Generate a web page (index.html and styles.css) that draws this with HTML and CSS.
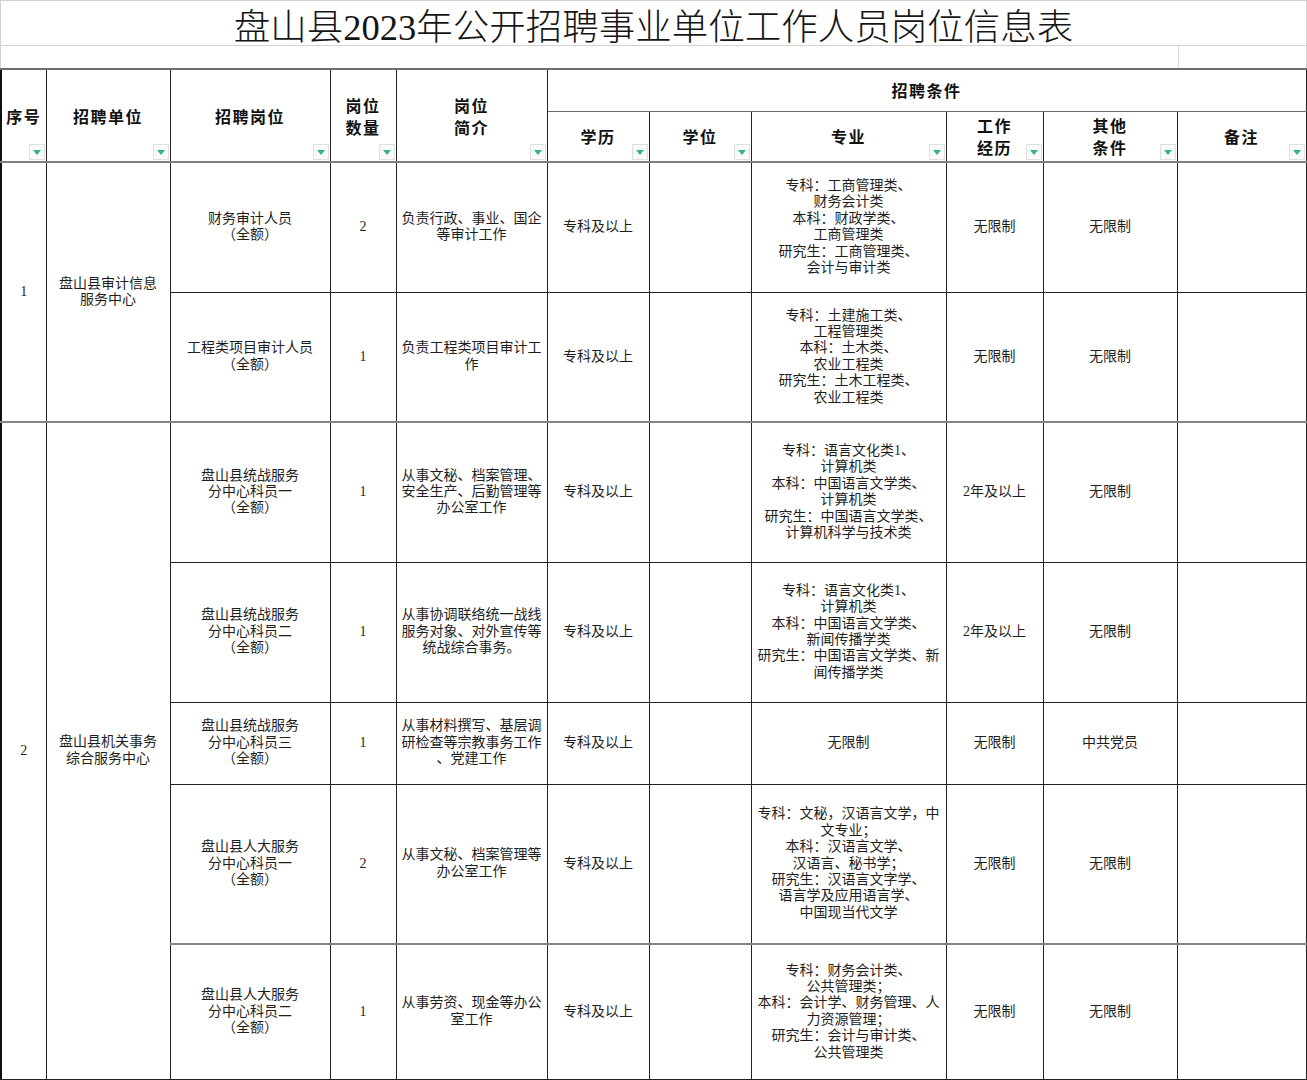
FILE: index.html
```html
<!DOCTYPE html>
<html lang="zh-CN">
<head>
<meta charset="utf-8">
<title>盘山县2023年公开招聘事业单位工作人员岗位信息表</title>
<link rel="stylesheet" href="styles.css">
</head>
<body>
<div class="sheet">
  <div class="title">盘山县2023年公开招聘事业单位工作人员岗位信息表</div>
  <div class="gap"><div class="gap-a"></div><div class="gap-b"></div></div>
  <table class="grid">
    <colgroup>
      <col class="c1"><col class="c2"><col class="c3"><col class="c4"><col class="c5"><col class="c6"><col class="c7"><col class="c8"><col class="c9"><col class="c10"><col class="c11">
    </colgroup>
    <thead>
      <tr class="h1">
        <th rowspan="2">序号<span class="dd"></span></th>
        <th rowspan="2">招聘单位<span class="dd"></span></th>
        <th rowspan="2">招聘岗位<span class="dd"></span></th>
        <th rowspan="2">岗位<br>数量<span class="dd"></span></th>
        <th rowspan="2">岗位<br>简介<span class="dd"></span></th>
        <th colspan="6" class="group">招聘条件</th>
      </tr>
      <tr class="h2">
        <th>学历<span class="dd"></span></th>
        <th>学位<span class="dd"></span></th>
        <th>专业<span class="dd"></span></th>
        <th>工作<br>经历<span class="dd"></span></th>
        <th>其他<br>条件<span class="dd"></span></th>
        <th>备注<span class="dd"></span></th>
      </tr>
    </thead>
    <tbody>
      <tr class="r130">
        <td rowspan="2">1</td>
        <td rowspan="2">盘山县审计信息<br>服务中心</td>
        <td>财务审计人员<br>（全额）</td>
        <td>2</td>
        <td>负责行政、事业、国企<br>等审计工作</td>
        <td>专科及以上</td>
        <td></td>
        <td>专科：工商管理类、<br>财务会计类<br>本科：财政学类、<br>工商管理类<br>研究生：工商管理类、<br>会计与审计类</td>
        <td>无限制</td>
        <td>无限制</td>
        <td></td>
      </tr>
      <tr class="r130">
        <td>工程类项目审计人员<br>（全额）</td>
        <td>1</td>
        <td>负责工程类项目审计工<br>作</td>
        <td>专科及以上</td>
        <td></td>
        <td>专科：土建施工类、<br>工程管理类<br>本科：土木类、<br>农业工程类<br>研究生：土木工程类、<br>农业工程类</td>
        <td>无限制</td>
        <td>无限制</td>
        <td></td>
      </tr>
      <tr class="r140 sep">
        <td rowspan="5">2</td>
        <td rowspan="5">盘山县机关事务<br>综合服务中心</td>
        <td>盘山县统战服务<br>分中心科员一<br>（全额）</td>
        <td>1</td>
        <td>从事文秘、档案管理、<br>安全生产、后勤管理等<br>办公室工作</td>
        <td>专科及以上</td>
        <td></td>
        <td>专科：语言文化类1、<br>计算机类<br>本科：中国语言文学类、<br>计算机类<br>研究生：中国语言文学类、<br>计算机科学与技术类</td>
        <td>2年及以上</td>
        <td>无限制</td>
        <td></td>
      </tr>
      <tr class="r140">
        <td>盘山县统战服务<br>分中心科员二<br>（全额）</td>
        <td>1</td>
        <td>从事协调联络统一战线<br>服务对象、对外宣传等<br>统战综合事务。</td>
        <td>专科及以上</td>
        <td></td>
        <td>专科：语言文化类1、<br>计算机类<br>本科：中国语言文学类、<br>新闻传播学类<br>研究生：中国语言文学类、新<br>闻传播学类</td>
        <td>2年及以上</td>
        <td>无限制</td>
        <td></td>
      </tr>
      <tr class="r82">
        <td>盘山县统战服务<br>分中心科员三<br>（全额）</td>
        <td>1</td>
        <td>从事材料撰写、基层调<br>研检查等宗教事务工作<br>、党建工作</td>
        <td>专科及以上</td>
        <td></td>
        <td>无限制</td>
        <td>无限制</td>
        <td>中共党员</td>
        <td></td>
      </tr>
      <tr class="r160">
        <td>盘山县人大服务<br>分中心科员一<br>（全额）</td>
        <td>2</td>
        <td>从事文秘、档案管理等<br>办公室工作</td>
        <td>专科及以上</td>
        <td></td>
        <td>专科：文秘，汉语言文学，中<br>文专业；<br>本科：汉语言文学、<br>汉语言、秘书学；<br>研究生：汉语言文字学、<br>语言学及应用语言学、<br>中国现当代文学</td>
        <td>无限制</td>
        <td>无限制</td>
        <td></td>
      </tr>
      <tr class="r135 sep">
        <td>盘山县人大服务<br>分中心科员二<br>（全额）</td>
        <td>1</td>
        <td>从事劳资、现金等办公<br>室工作</td>
        <td>专科及以上</td>
        <td></td>
        <td>专科：财务会计类、<br>公共管理类；<br>本科：会计学、财务管理、人<br>力资源管理；<br>研究生：会计与审计类、<br>公共管理类</td>
        <td>无限制</td>
        <td>无限制</td>
        <td></td>
      </tr>
    </tbody>
  </table>
</div>
</body>
</html>
```
FILE: styles.css
```css
html, body {
  margin: 0;
  padding: 0;
  background: #ffffff;
}

body {
  font-family: "Liberation Serif", "Noto Sans CJK SC", serif;
  color: #1c1c1c;
}

.sheet {
  width: 1307px;
}

.title {
  box-sizing: border-box;
  height: 46px;
  border: 1px solid #d2d2d2;
  display: flex;
  align-items: center;
  justify-content: center;
  font-size: 36.5px;
  font-weight: 300;
  color: #151515;
  padding-top: 2px;
}

.gap {
  box-sizing: border-box;
  height: 22px;
  display: grid;
  grid-template-columns: 1177px 1fr;
  border-left: 1px solid #d2d2d2;
  border-right: 1px solid #d2d2d2;
}

.gap-b {
  border-left: 1px solid #dadada;
}

.grid {
  border-collapse: collapse;
  table-layout: fixed;
  width: 1306px;
  border-left: 2px solid #111111;
}

.c1 { width: 45px; }
.c2 { width: 124px; }
.c3 { width: 160px; }
.c4 { width: 66px; }
.c5 { width: 151px; }
.c6 { width: 102px; }
.c7 { width: 102px; }
.c8 { width: 195px; }
.c9 { width: 97px; }
.c10 { width: 134px; }
.c11 { width: 129px; }

.grid th,
.grid td {
  border: 1px solid #222222;
  padding: 0 3px;
  text-align: center;
  vertical-align: middle;
  white-space: nowrap;
  overflow: hidden;
}

.grid th {
  position: relative;
  font-family: "Noto Sans CJK SC", sans-serif;
  font-weight: 700;
  font-size: 16px;
  letter-spacing: 1.5px;
  line-height: 22px;
  color: #111111;
}

.grid td {
  font-size: 14px;
  line-height: 16.4px;
  color: #1e1e1e;
}

.h1 { height: 42px; }
.h1 th { border-top: 2px solid #6e6e6e; }
.h1 th.group { border-bottom: 1px solid #6a6a6a; }
.h2 { height: 51px; }
.h2 th { border-bottom: 2px solid #808080; }
.h1 th[rowspan] { border-bottom: 2px solid #808080; }

.r130 { height: 130px; }
.r140 { height: 140px; }
.r82 { height: 82px; }
.r160 { height: 160px; }
.r135 { height: 135px; }

.sep td { border-top: 2px solid #858585; }

.dd {
  position: absolute;
  right: 1px;
  bottom: 1px;
  width: 16px;
  height: 16px;
  box-sizing: border-box;
  border: 1px solid #e0e0e0;
  background: #fafafa;
}

.dd::after {
  content: "";
  position: absolute;
  left: 3px;
  top: 5px;
  width: 0;
  height: 0;
  border-left: 4px solid transparent;
  border-right: 4px solid transparent;
  border-top: 5px solid #34b482;
}
```
